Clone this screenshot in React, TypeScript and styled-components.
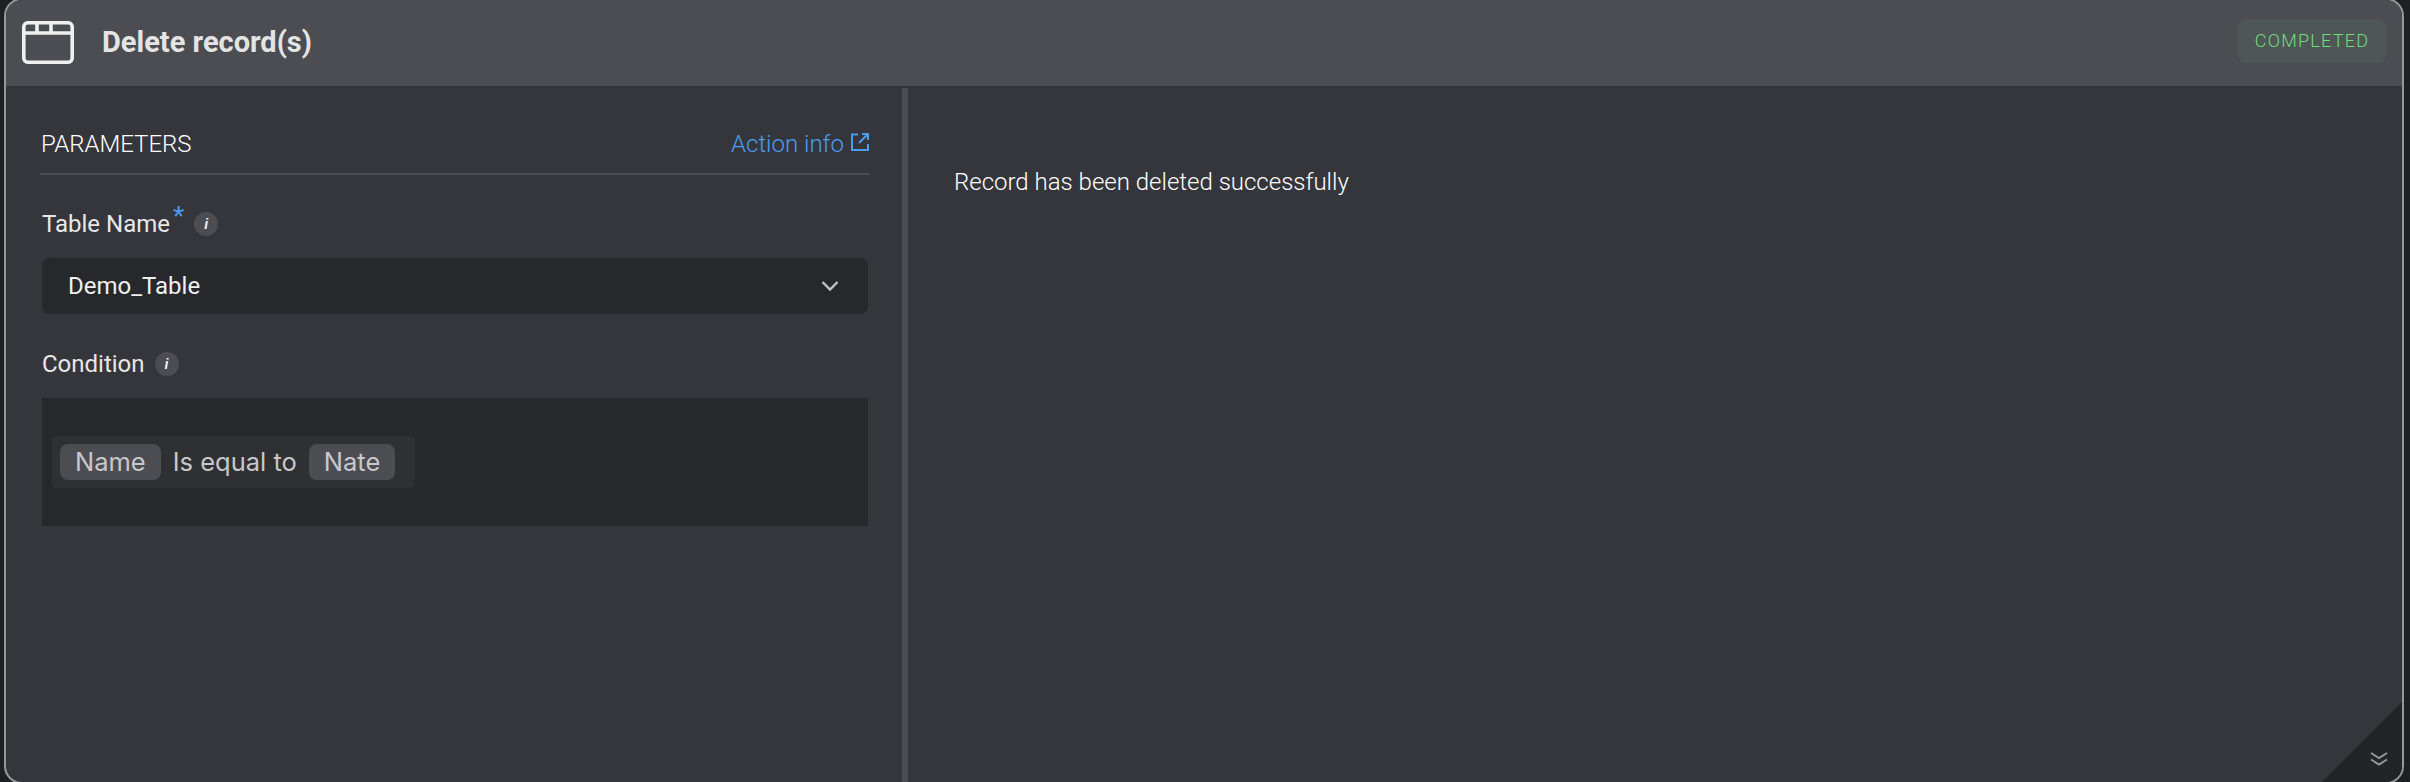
import { createGlobalStyle } from "styled-components";
import styled from "styled-components";

const GlobalStyle = createGlobalStyle`
  html, body {
    margin: 0;
    padding: 0;
    height: 100%;
    background-color: #1f2023;
    overflow: hidden;
  }
  * {
    box-sizing: border-box;
  }
  #root {
    height: 100%;
  }
`;

const Card = styled.div`
  position: relative;
  margin: -2px 6px 0 4px;
  height: 786px;
  width: 2400px;
  display: flex;
  flex-direction: column;
  background-color: #35363b;
  border: 2px solid #97989b;
  border-radius: 18px;
  overflow: hidden;
  font-family: Roboto, "Liberation Sans", sans-serif;
`;

const Header = styled.div`
  height: 86px;
  flex: none;
  display: flex;
  align-items: center;
  justify-content: space-between;
  padding: 0 16px 2px 16px;
  background-color: #4c4d52;
`;

const TitleGroup = styled.div`
  display: flex;
  align-items: center;
  gap: 28px;
`;

const Title = styled.h1`
  margin: 0;
  font-size: 29px;
  font-weight: 700;
  color: #e4e4e5;
`;

const Badge = styled.div`
  width: 148px;
  height: 44px;
  margin-top: -2px;
  padding-bottom: 2px;
  display: flex;
  align-items: center;
  justify-content: center;
  border-radius: 9px;
  background-color: #4e5755;
  color: #6fdc80;
  font-size: 18px;
  font-weight: 300;
  letter-spacing: 1.25px;
`;

const Body = styled.div`
  flex: 1;
  display: flex;
  min-height: 0;
  padding-top: 2px;
`;

const LeftPanel = styled.section`
  width: 896px;
  flex: none;
  padding: 32px 32px 0 34px;
`;

const Splitter = styled.div`
  width: 6px;
  flex: none;
  background-color: #4c4d52;
`;

const RightPanel = styled.section`
  flex: 1;
  padding: 80px 46px;
`;

const Message = styled.p`
  margin: 0;
  font-size: 24px;
  font-weight: 300;
  line-height: 28px;
  color: #ffffff;
`;

const SectionHead = styled.div`
  height: 55px;
  display: flex;
  align-items: flex-start;
  justify-content: space-between;
  padding: 10px 1px 0;
  border-bottom: 2px solid #4c4d52;
`;

const SectionTitle = styled.span`
  font-size: 24px;
  font-weight: 300;
  line-height: 28px;
  color: #ffffff;
`;

const InfoLink = styled.a`
  display: flex;
  align-items: flex-start;
  gap: 7px;
  font-size: 24px;
  font-weight: 300;
  line-height: 28px;
  color: #4a9cf0;
  svg {
    margin-top: 3px;
  }
`;

const FieldLabel = styled.div<{ $top: number }>`
  display: flex;
  align-items: center;
  height: 26px;
  margin: ${(p) => p.$top}px 0 0 2px;
  font-size: 24px;
  color: #e8e8e9;
`;

const Required = styled.sup`
  align-self: flex-start;
  margin: -9px 0 0 3px;
  font-size: 26px;
  line-height: 28px;
  color: #4a9cf0;
`;

const InfoDot = styled.span`
  width: 24px;
  height: 24px;
  margin-left: 10px;
  display: inline-flex;
  align-items: center;
  justify-content: center;
  border-radius: 50%;
  background-color: #4c4d52;
  color: #f2f2f2;
  font-family: "Liberation Sans", sans-serif;
  font-style: italic;
  font-weight: 700;
  font-size: 14px;
`;

const Select = styled.div`
  width: 826px;
  height: 56px;
  margin: 21px 0 0 2px;
  padding: 0 29px 0 26px;
  display: flex;
  align-items: center;
  justify-content: space-between;
  border-radius: 8px;
  background-color: #27282c;
  color: #f0f0f0;
  font-size: 24px;
`;

const ConditionBox = styled.div`
  width: 826px;
  height: 128px;
  margin: 21px 0 0 2px;
  padding: 0 10px;
  display: flex;
  align-items: center;
  background-color: #27282c;
`;

const ConditionRow = styled.div`
  height: 52px;
  padding: 0 20px 0 8px;
  display: flex;
  align-items: center;
  gap: 12px;
  border-radius: 4px;
  background-color: #2f3034;
  font-family: Inter, "Open Sans", sans-serif;
  font-size: 25.5px;
  color: #c8c8ca;
`;

const Chip = styled.span`
  height: 36px;
  padding: 0 15px 2px;
  display: flex;
  align-items: center;
  border-radius: 8px;
  background-color: #4c4d52;
`;

const ConditionText = styled.span`
  margin-top: -2px;
`;

const Corner = styled.div`
  position: absolute;
  right: 0;
  bottom: 0;
  width: 80px;
  height: 80px;
  background-color: #232428;
  clip-path: polygon(100% 0, 100% 100%, 0 100%);
`;

const CornerIcon = styled.svg`
  position: absolute;
  right: 14px;
  bottom: 16px;
`;

const App = () => {
  return (
    <>
      <GlobalStyle />
      <Card>
        <Header>
          <TitleGroup>
            <svg width="52" height="43" viewBox="0 0 52 43" fill="none" stroke="#f0f0f0" strokeWidth="3.6">
              <rect x="1.8" y="1.8" width="48.4" height="39.4" rx="4" />
              <path d="M1.8 12H50.2M15 1.8V12M29 1.8V12" />
            </svg>
            <Title>Delete record(s)</Title>
          </TitleGroup>
          <Badge>COMPLETED</Badge>
        </Header>
        <Body>
          <LeftPanel>
            <SectionHead>
              <SectionTitle>PARAMETERS</SectionTitle>
              <InfoLink>
                Action info
                <svg width="18" height="18" viewBox="0 0 18 18" fill="none" stroke="#4a9cf0" strokeWidth="2">
                  <path d="M7 1.5H1V17H17V11M11 1H17V7M17 1L8 10" />
                </svg>
              </InfoLink>
            </SectionHead>
            <FieldLabel $top={36}>
              Table Name
              <Required>*</Required>
              <InfoDot>i</InfoDot>
            </FieldLabel>
            <Select>
              Demo_Table
              <svg width="18" height="12" viewBox="0 0 18 12" fill="none" stroke="#c4c4c6" strokeWidth="2.4">
                <path d="M1.5 2L9 9.5L16.5 2" />
              </svg>
            </Select>
            <FieldLabel $top={37}>
              Condition
              <InfoDot>i</InfoDot>
            </FieldLabel>
            <ConditionBox>
              <ConditionRow>
                <Chip>Name</Chip>
                <ConditionText>Is equal to</ConditionText>
                <Chip>Nate</Chip>
              </ConditionRow>
            </ConditionBox>
          </LeftPanel>
          <Splitter />
          <RightPanel>
            <Message>Record has been deleted successfully</Message>
          </RightPanel>
        </Body>
        <Corner />
        <CornerIcon width="18" height="14" viewBox="0 0 18 14" fill="none" stroke="#97989b" strokeWidth="2">
          <path d="M1 1L9 6L17 1M1 7.5L9 12.5L17 7.5" />
        </CornerIcon>
      </Card>
    </>
  );
};

export default App;
